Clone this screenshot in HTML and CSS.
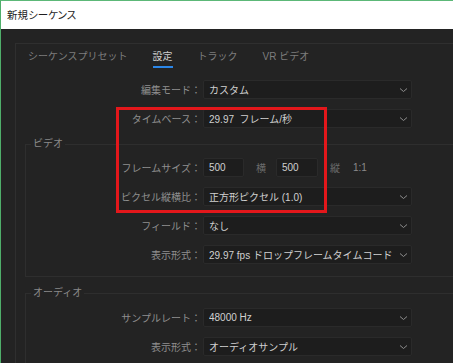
FILE: index.html
```html
<!DOCTYPE html>
<html lang="ja">
<head>
<meta charset="utf-8">
<title>新規シーケンス</title>
<link rel="stylesheet" href="styles.css">
</head>
<body>
<div class="window">
  <div class="titlebar">新規シーケンス</div>
  <div class="content">
    <div class="panel">
      <div class="tabs">
        <span class="tab">シーケンスプリセット</span>
        <span class="tab active">設定</span>
        <span class="tab">トラック</span>
        <span class="tab">VR ビデオ</span>
      </div>
      <div class="form">
        <div class="row">
          <span class="label">編集モード：</span>
          <div class="select"><span class="value">カスタム</span><svg class="chev" width="9" height="6" viewBox="0 0 9 6"><path d="M1 1.5 L4.5 4.5 L8 1.5" fill="none" stroke="#8d8d8d" stroke-width="1"/></svg></div>
        </div>
        <div class="row">
          <span class="label">タイムベース：</span>
          <div class="select"><span class="value">29.97&nbsp; フレーム/秒</span><svg class="chev" width="9" height="6" viewBox="0 0 9 6"><path d="M1 1.5 L4.5 4.5 L8 1.5" fill="none" stroke="#8d8d8d" stroke-width="1"/></svg></div>
        </div>
      </div>
      <fieldset class="group">
        <legend>ビデオ</legend>
        <div class="row">
          <span class="label sub">フレームサイズ：</span>
          <div class="field small">500</div>
          <span class="unit">横</span>
          <div class="field small2">500</div>
          <span class="unit">縦</span>
          <span class="ratio">1:1</span>
        </div>
        <div class="row">
          <span class="label sub">ピクセル縦横比：</span>
          <div class="select"><span class="value">正方形ピクセル (1.0)</span><svg class="chev" width="9" height="6" viewBox="0 0 9 6"><path d="M1 1.5 L4.5 4.5 L8 1.5" fill="none" stroke="#8d8d8d" stroke-width="1"/></svg></div>
        </div>
        <div class="row">
          <span class="label sub">フィールド：</span>
          <div class="select"><span class="value">なし</span><svg class="chev" width="9" height="6" viewBox="0 0 9 6"><path d="M1 1.5 L4.5 4.5 L8 1.5" fill="none" stroke="#8d8d8d" stroke-width="1"/></svg></div>
        </div>
        <div class="row">
          <span class="label sub">表示形式：</span>
          <div class="select"><span class="value">29.97 fps ドロップフレームタイムコード</span><svg class="chev" width="9" height="6" viewBox="0 0 9 6"><path d="M1 1.5 L4.5 4.5 L8 1.5" fill="none" stroke="#8d8d8d" stroke-width="1"/></svg></div>
        </div>
      </fieldset>
      <fieldset class="group audio">
        <legend>オーディオ</legend>
        <div class="row">
          <span class="label sub">サンプルレート：</span>
          <div class="select"><span class="value">48000 Hz</span><svg class="chev" width="9" height="6" viewBox="0 0 9 6"><path d="M1 1.5 L4.5 4.5 L8 1.5" fill="none" stroke="#8d8d8d" stroke-width="1"/></svg></div>
        </div>
        <div class="row">
          <span class="label sub">表示形式：</span>
          <div class="select"><span class="value">オーディオサンプル</span><svg class="chev" width="9" height="6" viewBox="0 0 9 6"><path d="M1 1.5 L4.5 4.5 L8 1.5" fill="none" stroke="#8d8d8d" stroke-width="1"/></svg></div>
        </div>
      </fieldset>
    </div>
  </div>
  <div class="highlight"></div>
</div>
</body>
</html>
```

FILE: styles.css
```css
* { box-sizing: border-box; }
html, body {
  margin: 0;
  padding: 0;
  width: 453px;
  height: 363px;
  overflow: hidden;
  background: #232323;
}
body {
  font-family: "Liberation Sans", "Noto Sans CJK JP", sans-serif;
  font-size: 10px;
}
.window {
  position: relative;
  width: 453px;
  height: 363px;
  border-top: 1px solid #5cb878;
  border-left: 1px solid #4fae6a;
  overflow: hidden;
}
.titlebar {
  height: 28px;
  background: #ffffff;
  color: #1e1e1e;
  font-size: 10.5px;
  font-feature-settings: "palt";
  line-height: 28px;
  padding-left: 6px;
}
.content {
  background: #232323;
  padding: 14px 0 0 14px;
  height: 334px;
}
.panel {
  border: 1px solid #2f2f2f;
  border-right: none;
  height: 400px;
  display: flex;
  flex-direction: column;
}
.tabs {
  display: flex;
  gap: 25px;
  padding-left: 12px;
  height: 24px;
}
.tab {
  color: #7e7e7e;
  line-height: 14px;
  padding-top: 6px;
  padding-bottom: 2px;
  border-bottom: 2px solid transparent;
  white-space: nowrap;
}
.tab.active {
  color: #cfcfcf;
  border-bottom-color: #2b86e8;
}
.form {
  margin-top: 12px;
  display: flex;
  flex-direction: column;
  gap: 10px;
}
.row {
  display: flex;
  align-items: center;
  height: 19px;
}
.group .row + .row { margin-top: 10px; }
.label {
  width: 185px;
  margin-right: 2px;
  text-align: right;
  color: #8f8f8f;
  white-space: nowrap;
}
.label.sub { width: 175px; }
.select, .field {
  height: 19px;
  background: #1d1d1d;
  border: 1px solid #2a2a2a;
  border-radius: 2px;
  color: #d0d0d0;
  display: flex;
  align-items: center;
  padding-left: 5px;
  white-space: nowrap;
}
.select {
  width: 209px;
  position: relative;
  overflow: hidden;
}
.select .value { flex: 1; overflow: hidden; }
.chev {
  flex: none;
  margin: 0 3px 0 0;
}
.field.small { width: 41px; }
.field.small2 { width: 42px; }
.unit {
  color: #6c6c6c;
  margin: 0 10px 0 12px;
}
.ratio {
  color: #8a8a8a;
  margin-left: 3px;
}
.group {
  margin: 9px 0 0 9px;
  padding: 7px 0 12px 0;
  border: 1px solid #2e2e2e;
  border-right: none;
  min-width: 0;
}
.group.audio {
  padding-top: 8px;
  padding-bottom: 40px;
}
.group legend {
  color: #8a8a8a;
  line-height: 14px;
  padding: 0 2px;
  margin-left: 5px;
}
.highlight {
  position: absolute;
  left: 115px;
  top: 106px;
  width: 211px;
  height: 106px;
  border: 3px solid #e3171b;
}
```
